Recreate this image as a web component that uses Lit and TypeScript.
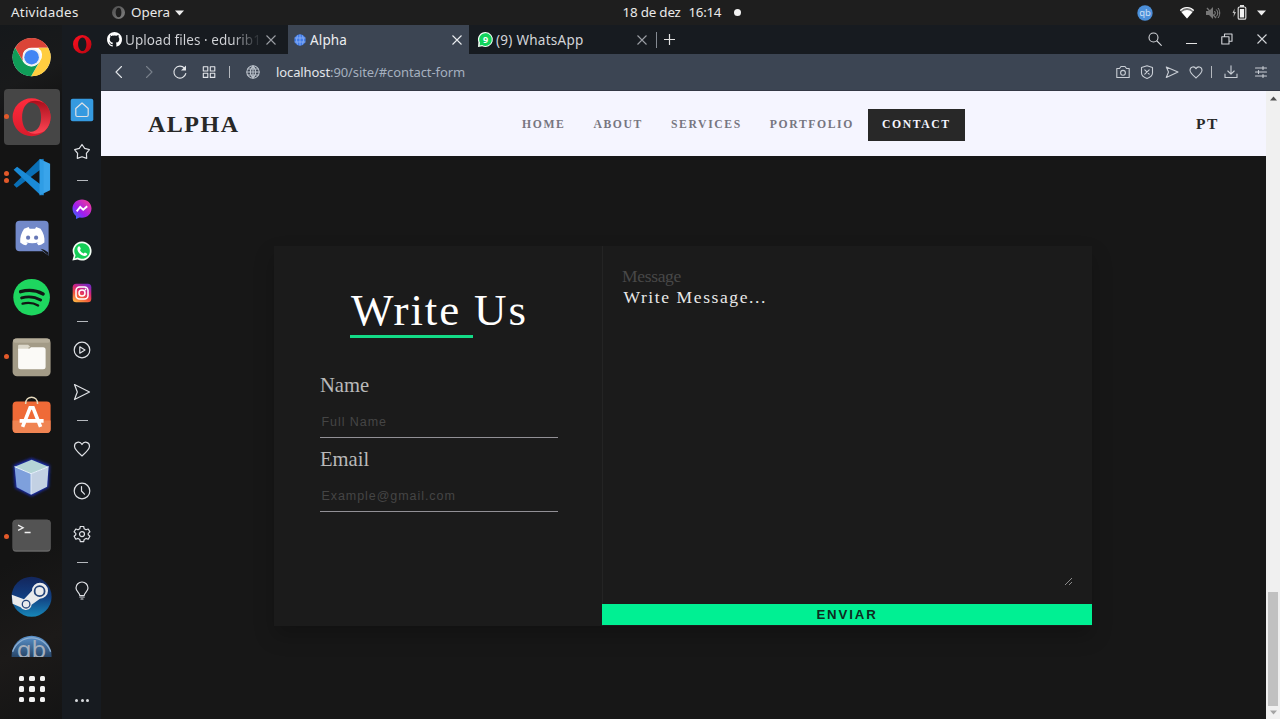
import { LitElement, html, svg, css } from "lit";
import { customElement } from "lit/decorators.js";

const shared = css`
  :host { box-sizing: border-box; }
  * { box-sizing: border-box; }
  svg { display: block; flex: none; overflow: visible; }
  .line { fill: none; stroke: currentColor; stroke-width: 1.2; stroke-linecap: round; stroke-linejoin: round; }
`;

const icon = (size: number, body: unknown, cls = "") =>
  html`<svg class=${cls} width=${size} height=${size} viewBox="0 0 ${size} ${size}">${body}</svg>`;

const operaRing = (id: string, a: string, b: string) => svg`
  <defs><linearGradient id=${id} x1="0" y1="0" x2="1" y2="1"><stop offset="0" stop-color=${a}/><stop offset="1" stop-color=${b}/></linearGradient></defs>
  <path fill="url(#${id})" fill-rule="evenodd" d="M19 0a19 19 0 1 0 0 38a19 19 0 1 0 0-38zM19.500 5c5 0 8 6 8 14s-3 14-8 14s-9-6-9-14s4-14 9-14z"/>`;

const whatsapp = svg`
  <path fill="#f4fff6" d="M10 .5a9.5 9.5 0 1 1-4.4 17.9L.4 19.6l1.4-5A9.5 9.5 0 0 1 10 .5z"/>
  <path fill="#14cf57" d="M10 2.2a7.8 7.8 0 1 1-4.1 14.4l-3.2.8.9-3.1A7.8 7.8 0 0 1 10 2.2z"/>
  <path fill="#fff" d="M6.5 5.6c.5-.5 1.1-.4 1.4.2l.8 1.8c.2.6-.9 1.3-.7 1.7.8 1.6 1.9 2.5 3.4 3.1.5.2 1.1-1.2 1.6-1l1.9 1c.6.4.4 1.300-.3 1.900-1.200 1.100-2.800.9-4.600 0-2.300-1.200-4-3.200-4.500-5.300-.300-1.400.200-2.800 1-3.400z"/>`;

@customElement("system-bar")
class SystemBar extends LitElement {
  static styles = [shared, css`
    :host { display: flex; height: 25px; align-items: center; background: #1e1e1e; color: #e9e9e9;
      font: 13.4px/25px "Noto Sans", sans-serif; white-space: nowrap; }
    .activities { width: 67px; margin-left: 11px; letter-spacing: .25px; }
    .app-icon { margin-left: 33.500px; }
    .app { width: 39px; margin-left: 6.500px; }
    .caret { margin-left: 5px; }
    .date { width: 59px; margin-left: 438.500px; letter-spacing: -.2px; }
    .time { width: 34px; margin-left: 7px; letter-spacing: -.3px; }
    .dot { width: 7px; height: 7px; border-radius: 50%; background: #f2f2f2; margin-left: 11px; }
    .tray { display: flex; align-items: center; margin-left: auto; padding-right: 14px; }
    .wifi { margin-left: 27px; }
    .mute { margin-left: 12px; }
    .battery { margin-left: 12px; }
    .tray-caret { margin-left: 10px; }
    .gb { font: 9.500px "Noto Sans", sans-serif; }
  `];
  render() {
    return html`
      <span class="activities">Atividades</span>
      <svg class="app-icon" width="13" height="13" viewBox="0 0 38 38">${operaRing("g", "#4b4b4b", "#838383")}</svg>
      <span class="app">Opera</span>
      <svg class="caret" width="9" height="6"><path fill="#eee" d="M0 .5h9L4.500 5.500z"/></svg>
      <span class="date">18 de dez</span><span class="time">16:14</span><span class="dot"></span>
      <div class="tray">
        <svg width="16" height="16"><circle cx="8" cy="8" r="7.700" fill="#4c8fd9"/><text class="gb" x="8" y="11" text-anchor="middle" fill="#c9def5">qb</text></svg>
        <svg class="wifi" width="14" height="13"><path d="M0 4.500C4 0 10 0 14 4.500L7 12.500z" fill="#777"/><path d="M1.600 6.300C5 3.300 9 3.300 12.400 6.300L7 12.500z" fill="#fff"/><path d="M.300 4.500C4 .500 10 .500 13.700 4.500" fill="none" stroke="#fff" stroke-width="1.200"/></svg>
        <svg class="mute" width="14" height="14"><path fill="#777" d="M0 5h3l4-4v12L3 9H0z"/><path d="M1 2l9 10" stroke="#777" stroke-width="1.300"/><path d="M8.500 5c1 1.300 1 2.700 0 4M10.300 3.500c2 2 2 5 0 7M12 2c2.300 3 2.300 7 0 10" fill="none" stroke="#888"/></svg>
        <svg class="battery" width="15" height="15"><path d="M2.600 3.500L.500 8h1.500l-.500 4L4 7H2.400z" fill="#bbb"/><rect x="6.200" y="2" width="7.600" height="12.200" rx="1.300" fill="none" stroke="#ddd" stroke-width="1.200"/><rect x="8" y="0" width="4" height="2" fill="#ddd"/><rect x="7.900" y="4" width="4.200" height="8.500" fill="#f2f2f2"/></svg>
        <svg class="tray-caret" width="9" height="6"><path fill="#eee" d="M0 .500h9L4.500 5.500z"/></svg>
      </div>`;
  }
}

const apps: { art: unknown; dots?: number; active?: boolean }[] = [
  { art: svg`<circle cx="20" cy="20" r="19" fill="#fff"/>
      <path fill="#db4437" d="M3.500 10.500A19 19 0 0 1 36.500 10.500H20a9.500 9.500 0 0 0-8.600 5.500L11 23.500z"/>
      <path fill="#ffcd40" d="M36.500 10.500A19 19 0 0 1 19.500 39l8.700-14.700a9.500 9.500 0 0 0-1.600-13.800z"/>
      <path fill="#0f9d58" d="M3.500 10.500A19 19 0 0 0 19.500 39l7.900-13.600a9.500 9.500 0 0 1-15.700-.700z"/>
      <circle cx="20" cy="20" r="9" fill="#f1f1f1"/><circle cx="20" cy="20" r="7.300" fill="#4285f4"/>` },
  { dots: 1, active: true, art: svg`<defs>
        <linearGradient id="o1" x1="0" y1="0" x2="0" y2="1"><stop offset="0" stop-color="#ff2b3c"/><stop offset="1" stop-color="#d91b2c"/></linearGradient>
        <linearGradient id="o2" x1="0" y1="0" x2="0" y2="1"><stop offset="0" stop-color="#a90f1c"/><stop offset="1" stop-color="#ff4554"/></linearGradient></defs>
      <path fill="url(#o1)" fill-rule="evenodd" d="M20 1a19 19 0 1 0 0 38a19 19 0 1 0 0-38zM20.500 4.500c6 0 9.500 7 9.500 15.500s-3.500 15.500-9.500 15.500s-10-7-10-15.500s4-15.500 10-15.500z"/>
      <path fill="url(#o2)" d="M15 7C19 2.500 26 2.500 32.700 5.900A19 19 0 0 1 32.700 34.100C26 37.500 19 37.500 15 33C21 37 29.500 33 29.500 20S21 3 15 7z"/>` },
  { dots: 2, art: svg`<path fill="#0a6fb5" d="M2 27.500L5 30.500 32 10V2L28 2z"/><path fill="#1a8ad6" d="M2 12.500L5.500 9.500 32 29.500V38L28 37z"/><path fill="#39a4ea" d="M28 1.800L38.500 6.500V33L28 38z"/><path fill="#2596e0" d="M28 2l4-.500V38l-4 .300z" opacity=".5"/>` },
  { art: svg`<path fill="#7289c9" d="M8 3.500h25a4 4 0 0 1 4 4V38.500l-6-4.500H8a4 4 0 0 1-4-4v-22.500a4 4 0 0 1 4-4z"/>
      <path fill="#17191d" d="M29 31.500l8 7-.500-3.500-4-2.500z"/>
      <path fill="#fff" d="M12.500 11.500l4.500-1.700 1 1.700h5.500l1-1.700 4.500 1.700c3 4.300 4.300 8.700 3.800 13.700-2 1.700-3.800 2.500-6 2.900l-1.600-2.200 2-1c-4.300 1.600-8.800 1.600-13 0l2 1-1.600 2.200c-2.200-.400-4-1.200-6-2.900-.300-5 1-9.400 3.900-13.700z"/>
      <circle cx="16.500" cy="20.500" r="2.100" fill="#6677b6"/><circle cx="24.500" cy="20.500" r="2.100" fill="#6677b6"/>` },
  { art: svg`<circle cx="20" cy="20" r="18.300" fill="#1ed65f"/><g fill="none" stroke="#121815" stroke-linecap="round"><path stroke-width="3.400" d="M9 14.500c7-2 16-1.300 22.500 2.200"/><path stroke-width="2.900" d="M10 20.700c6.500-1.700 13.500-1 19 2.200"/><path stroke-width="2.400" d="M11 26.400c5.500-1.300 11-.800 15.500 1.900"/></g>` },
  { dots: 1, art: svg`<rect x="1" y="1" width="38" height="38" rx="4.500" fill="#a39b87"/><rect x="1.500" y="1.500" width="37" height="4" rx="2" fill="#b6ae9b"/><path fill="#dcd8cb" d="M6.500 8.500a1 1 0 0 1 1-1H16.500l2.500 2.500h-2v3H6.500z"/><path fill="#fbfaf7" d="M6.500 11.500h11l2-1.500H31.500a2.500 2.500 0 0 1 2.500 2.500V29.500a2.500 2.500 0 0 1-2.500 2.500H9a2.500 2.500 0 0 1-2.500-2.500z"/>` },
  { art: svg`<g transform="translate(0 -1.800)"><rect x="1" y="6" width="38" height="31.500" rx="4" fill="#ef6a37"/><path fill="#f08452" d="M1 25h38v8.500a4 4 0 0 1-4 4H5a4 4 0 0 1-4-4z"/><path d="M14 8.500C14-.5 26-.5 26 8.500" fill="none" stroke="#e5d9bd" stroke-width="1.500"/><path d="M11 31.500L18.500 12.500h3L29 31.500M8 25.500h24" fill="none" stroke="#fff" stroke-width="3.600"/></g>` },
  { art: svg`<defs><filter id="gl" x="-30%" y="-30%" width="160%" height="160%"><feGaussianBlur stdDeviation="1.500"/></filter></defs>
      <g transform="translate(0 -1)"><path filter="url(#gl)" fill="#1a2eb8" d="M20 2L38 9 37 31 20 40 3.500 31.500 2 9z"/>
      <path fill="#b4d5d6" d="M20 3.500L37 10.500 19.500 17.500 3 10.500z"/><path fill="#7ea0dc" d="M3 10.500L19.500 17.500V38.500L5 31z"/><path fill="#c3d1e3" d="M37 10.500L19.500 17.500V38.500L35.500 30.500z"/><path d="M3 10.500l16.500 7L37 10.500M19.500 17.500V38" fill="none" stroke="#eaf4fb"/></g>` },
  { dots: 1, art: svg`<rect x="1" y="3.500" width="38" height="32" rx="3.500" fill="#666"/><rect x="1" y="3.500" width="38" height="30.500" rx="3.500" fill="#535353"/><path d="M6.500 9l5 2.500-5 2.700M13 16.300h6" fill="none" stroke="#f0f0f0" stroke-width="1.300"/>` },
  { art: svg`<defs><linearGradient id="st" x1="0" y1="0" x2="0" y2="1"><stop offset="0" stop-color="#13265c"/><stop offset=".5" stop-color="#123e80"/><stop offset="1" stop-color="#1787b9"/></linearGradient></defs>
      <g transform="translate(-.5 1.500)"><circle cx="20.500" cy="19" r="20" fill="url(#st)"/><path fill="#e9eaec" d="M.700 17l12.200 4.500 8-8.500a8 8 0 1 1 8 8L20.500 27a6 6 0 0 1-11 2.500L1.500 26z"/><circle cx="28.500" cy="13.500" r="5" fill="#e9eaec" stroke="#234379" stroke-width="1.800"/><circle cx="15" cy="26.500" r="3.800" fill="none" stroke="#234379" stroke-width="1.300"/></g>` },
  { art: svg`<defs><linearGradient id="gb" x1="0" y1="0" x2="0" y2="1"><stop offset="0" stop-color="#5b93cc"/><stop offset=".5" stop-color="#2a4a6e"/></linearGradient></defs>
      <circle cx="20" cy="19.500" r="20" fill="url(#gb)"/><path d="M1 15.500A20 20 0 0 1 39 15.500" fill="none" stroke="#8eb0d3" stroke-width="1.300"/><text x="20" y="22" text-anchor="middle" font-family="Noto Sans, sans-serif" font-size="24" fill="#a4afbd">gb</text>` },
];

@customElement("app-dock")
class AppDock extends LitElement {
  static styles = [shared, css`
    :host { display: flex; flex-direction: column; width: 62px; padding-top: 2px; background: linear-gradient(155deg, #15181b 0, #191a1b 9%, #141414 14%, #141414 75%, #1c1a19 88%, #141414 100%); }
    .apps { height: 629.500px; overflow: hidden; flex: none; }
    .app { height: 59.950px; display: flex; align-items: center; }
    .wrap { display: flex; align-items: center; width: 56px; height: 56px; margin-left: 4px; border-radius: 4px; }
    .active { background: #464646; }
    .dots { width: 11.500px; margin-left: -4px; padding-left: 3.500px; display: grid; gap: 2.500px; }
    .dot { width: 5px; height: 5px; border-radius: 50%; background: #e2592a; }
    .grid { display: grid; grid-template-columns: repeat(3, 5.500px); gap: 5px; margin: 19px 0 0 18.700px; }
    .cell { height: 5.500px; border-radius: 1.500px; background: #f2f2f2; }
  `];
  render() {
    return html`<div class="apps">${apps.map((a) => html`<div class="app"><div class="wrap ${a.active ? "active" : ""}">
        <div class="dots">${Array.from({ length: a.dots ?? 0 }, () => html`<span class="dot"></span>`)}</div>
        ${icon(40, svg`<g transform="translate(-.4 .2)">${a.art}</g>`)}</div></div>`)}</div>
      <div class="grid">${Array.from({ length: 9 }, () => html`<span class="cell"></span>`)}</div>`;
  }
}

const side: unknown[] = [
  svg`<rect x="-1.300" y="-1.300" width="22.600" height="22.600" rx="2" fill="#359ae0"/><path class="line" stroke-width="1.400" d="M3.800 8.500L10 3l6.200 5.500V15a1.500 1.500 0 0 1-1.500 1.500H5.300A1.500 1.500 0 0 1 3.800 15z"/>`,
  svg`<path class="line" d="M10 2.500l2.700 3.900 4.700 1.200-3 3.800.300 5-4.700-1.700-4.700 1.700.300-5-3-3.800 4.700-1.200z"/>`,
  null,
  svg`<defs><linearGradient id="m" x1="0" y1="1" x2="1" y2="0"><stop offset="0" stop-color="#1b80ff"/><stop offset=".4" stop-color="#9c1df0"/><stop offset="1" stop-color="#ff3f8d"/></linearGradient></defs><path fill="url(#m)" d="M10 .500c5.500 0 9.500 3.900 9.500 9s-4 9.200-9.500 9.200l-2.500-.300L4 20v-3C1.800 15.300.500 12.700.500 9.500c0-5.100 4-9 9.500-9z"/><path d="M4.700 12.300L8.200 8l3 2.800 4-3.500" fill="none" stroke="#fff" stroke-width="1.900"/>`,
  whatsapp,
  svg`<defs><linearGradient id="ig" x1=".2" y1="1" x2=".7" y2="0"><stop offset="0" stop-color="#fdb243"/><stop offset=".35" stop-color="#f3543b"/><stop offset=".65" stop-color="#d4257d"/><stop offset="1" stop-color="#7a2bc0"/></linearGradient></defs><rect x=".700" y=".700" width="18.600" height="18.600" rx="3.500" fill="url(#ig)"/><g fill="none" stroke="#fff" stroke-width="1.500"><rect x="4" y="4" width="12" height="12" rx="3.500"/><circle cx="10" cy="10" r="3"/></g><circle cx="13.500" cy="6.500" r=".9" fill="#fff"/>`,
  null,
  svg`<circle class="line" cx="10" cy="10" r="7.800"/><path class="line" d="M7.800 6.800l5.200 3.200-5.200 3.200z"/>`,
  svg`<path class="line" d="M2.500 2.500L17.500 10 2.500 17.500 5.300 10z"/>`,
  null,
  svg`<path class="line" d="M10 17C6 13.500 2.500 10.500 2.500 7.300c0-4.500 5.500-5.500 7.500-1.800 2-3.700 7.500-2.700 7.500 1.800C17.500 10.500 14 13.500 10 17z"/>`,
  svg`<circle class="line" cx="10" cy="10" r="7.800"/><path class="line" d="M9.500 5.500V10l3 3.200"/>`,
  svg`<path class="line" d="M8.300 2.500h3.400l.500 2.300 1.800 1 2.200-.800 1.700 2.900-1.700 1.500v1.400l1.700 1.500-1.700 2.900-2.200-.800-1.800 1-.500 2.300H8.300l-.5-2.300-1.800-1-2.200.8-1.700-2.900 1.700-1.500V9.400L2.100 7.900 3.800 5l2.200.8 1.800-1z"/><circle class="line" cx="10" cy="10.100" r="2.500"/>`,
  null,
  svg`<path class="line" d="M7.800 14.500c0-2.500-3.800-4-3.800-7.500a6 6 0 0 1 12 0c0 3.500-3.800 5-3.800 7.500zM7.800 16h4.400M9 18h2"/>`,
];

@customElement("browser-sidebar")
class BrowserSidebar extends LitElement {
  static styles = [shared, css`
    :host { display: flex; flex-direction: column; align-items: center; width: 39px; background: #171b20; color: #dfe1e5; padding: 0 0 11.500px 1px; }
    .logo { margin: 9.500px 0 35.500px; }
    .item { height: 42.250px; display: flex; align-items: center; flex: none; }
    .sep { height: 14.600px; display: flex; align-items: center; flex: none; }
    .sep::before { content: ""; width: 11px; height: 1px; background: #b5b8bd; }
    .more { margin-top: auto; display: flex; gap: 2.200px; padding-bottom: 6px; }
    .more span { width: 3px; height: 3px; border-radius: 50%; background: #d8dade; }
  `];
  render() {
    return html`<svg class="logo" width="18.500" height="18.500" viewBox="0 0 38 38">${operaRing("so", "#ff1020", "#b80510")}</svg>
      ${side.map((s) => s ? html`<div class="item">${icon(20, s)}</div>` : html`<div class="sep"></div>`)}
      <div class="more"><span></span><span></span><span></span></div>`;
  }
}

const close = (cls = "") => html`<svg class=${cls} width="10" height="10"><path d="M.500.500l9 9M9.500.500l-9 9" fill="none" stroke="currentColor" stroke-width="1.100"/></svg>`;

@customElement("browser-chrome")
class BrowserChrome extends LitElement {
  static styles = [shared, css`
    :host { display: block; font: 13.500px/20px "Noto Sans", sans-serif; color: #d3d5d9; white-space: nowrap; }
    .tabs { display: flex; height: 29px; align-items: center; background: #171b20; padding-right: 12px; }
    .tab { display: flex; align-items: center; height: 29px; }
    .first { width: 187px; padding: 0 12px 0 6px; }
    .current { width: 181px; background: #3c4553; color: #eceef1; padding: 0 7.500px 0 6px; }
    .third { width: 187px; padding: 0 9px 0 9px; }
    .title { margin-left: 3px; flex: 1; }
    .current .title { margin-left: 4px; letter-spacing: .15px; }
    .third .title { letter-spacing: .27px; }
    .fade { letter-spacing: .05px; background: linear-gradient(90deg, #d3d5d9 76%, #33373c 92%); -webkit-background-clip: text; background-clip: text; color: transparent; }
    .dim { color: #9b9ea4; }
    .bar { width: 1px; height: 16px; background: #858a92; }
    .plus { margin-left: 7px; }
    .tools { display: flex; align-items: center; margin-left: auto; padding-right: 1px; }
    .tools svg { margin-top: -2px; }
    .min { margin-left: 24px; width: 11px; height: 1px; background: #e4e4e4; margin-top: 7px; }
    .tools .restore { margin-left: 24px; }
    .tools .x { margin-left: 24px; }
    .address { display: flex; height: 37px; align-items: center; background: #3c4553; border-bottom: 1px solid #333845; padding: 0 13.500px 0 10px; color: #e3e6ea; }
    .forward { margin-left: 14px; color: #79808b; }
    .reload { margin-left: 14.500px; }
    .apps { margin-left: 13.500px; }
    .sep { width: 1px; height: 12px; background: #b4b8be; }
    .s1 { margin-left: 12px; }
    .globe { margin-left: 14.500px; color: #b9c0c9; }
    .url { margin-left: 15.500px; font-size: 13px; letter-spacing: -.1px; }
    .path { color: #a5b0bf; }
    .actions { display: flex; align-items: center; margin-left: auto; color: #c9ced5; }
    .a { margin-left: 8.500px; }
    .s2 { margin-left: 7px; }
    .down { margin-left: 10.500px; }
    .tune { margin-left: 16px; }
    .line { stroke-width: 1.100; }
    .nine { font: bold 12px "Noto Sans", sans-serif; }
  `];
  render() {
    return html`
      <div class="tabs">
        <div class="tab first">
          <svg width="15" height="15" viewBox="0 0 16 16"><path fill="#fff" d="M8 0a8 8 0 0 0-2.530 15.590c.4.070.550-.170.550-.380v-1.490c-2.230.480-2.700-.950-2.700-.950-.360-.920-.890-1.170-.890-1.170-.730-.500.050-.490.050-.490.800.060 1.230.830 1.230.830.720 1.220 1.870.870 2.330.660.070-.520.280-.870.510-1.070-1.780-.200-3.640-.890-3.640-3.950 0-.870.310-1.590.820-2.150-.080-.200-.360-1.020.080-2.120 0 0 .670-.210 2.200.820a7.600 7.600 0 0 1 4 0c1.530-1.040 2.200-.820 2.200-.820.440 1.100.160 1.920.080 2.120.510.560.820 1.270.820 2.150 0 3.070-1.870 3.750-3.650 3.950.290.250.540.730.540 1.480v2.200c0 .210.150.460.550.380A8 8 0 0 0 8 0z"/></svg>
          <span class="title fade">Upload files · edurib1</span>${close("dim")}
        </div>
        <div class="tab current">
          <svg width="12" height="12"><circle cx="6" cy="6" r="5.700" fill="#3f7bea"/><path d="M.500 4h11M.500 8h11M6 .500v11M3.500 1.500q-2 4.500 0 9M8.500 1.500q2 4.500 0 9" fill="none" stroke="#93b5f5" stroke-width=".8"/></svg>
          <span class="title">Alpha</span>${close()}
        </div>
        <div class="tab third">
          <svg width="15" height="15" viewBox="0 0 20 20"><path fill="#f4fff6" d="M10 0a10 10 0 1 1-4.500 19L0 20l.500-6.500A10 10 0 0 1 10 0z"/><path fill="#12d35c" d="M10 1.500a8.500 8.500 0 1 1-4.500 15.700L2.200 18l.500-3.800A8.500 8.500 0 0 1 10 1.500z"/><text class="nine" x="10" y="14.300" text-anchor="middle" fill="#fff">9</text></svg>
          <span class="title">(9) WhatsApp</span>${close("dim")}
        </div>
        <div class="bar"></div>
        <svg class="plus" width="11" height="11"><path d="M5.500 0v11M0 5.500h11" stroke="#e2e2e2" stroke-width="1.200"/></svg>
        <div class="tools">
          <svg width="14" height="14"><circle class="line" cx="5.500" cy="5.500" r="4.500"/><path class="line" d="M9 9l4.300 4.300"/></svg>
          <div class="min"></div>
          <svg class="restore" width="12" height="12"><path class="line" d="M.800 3.800h7.200v7.200H.800zM3.500 3.500V1h7.500v7.200H8.500"/></svg>
          ${close("x")}
        </div>
      </div>
      <div class="address">
        ${icon(16, svg`<path class="line" d="M10.500 2.500L5 8l5.500 5.500"/>`)}
        ${icon(16, svg`<path class="line" d="M5.500 2.500L11 8l-5.500 5.500"/>`, "forward")}
        ${icon(16, svg`<path class="line" stroke-width="1.500" d="M12.500 4.200A6 6 0 1 0 13.800 9.500"/><path fill="currentColor" d="M14 1.500v5H9z"/>`, "reload")}
        ${icon(16, svg`<path class="line" d="M2.300 2.800h4.500v4.200H2.300zM9.300 2.800h4.500v4.200H9.300zM2.300 9.200h4.500v4.200H2.300zM9.300 9.200h4.500v4.200H9.300z"/>`, "apps")}
        <span class="sep s1"></span>
        ${icon(16, svg`<circle class="line" cx="8" cy="8" r="6.200"/><path class="line" d="M1.800 8h12.400M8 1.800v12.400M2.800 5h10.400M2.800 11h10.400M8 1.800Q2.500 8 8 14.200M8 1.800Q13.500 8 8 14.200"/>`, "globe")}
        <span class="url">localhost<span class="path">:90/site/#contact-form</span></span>
        <div class="actions">
          ${icon(16, svg`<path class="line" d="M1.800 4.500h2.700L6 2.500h4l1.500 2h2.700v9H1.800z"/><circle class="line" cx="8" cy="8.800" r="2.400"/>`)}
          ${icon(16, svg`<path class="line" d="M8 1.800l5.500 1.700v5.500c0 2.500-2.800 4.500-5.500 5.500-2.700-1-5.500-3-5.500-5.500V3.500zM5.800 5.800l4.400 4.400M10.200 5.800l-4.400 4.400"/>`, "a")}
          ${icon(16, svg`<path class="line" d="M2.300 3l11.700 5-11.700 5.500L4.500 8z"/>`, "a")}
          ${icon(16, svg`<path class="line" d="M8 14C5 11.200 2 9 2 6.300c0-4 4.700-4.500 6-1.500 1.300-3 6-2.500 6 1.500C14 9 11 11.200 8 14z"/>`, "a")}
          <span class="sep s2"></span>
          ${icon(16, svg`<path class="line" d="M8 1.800V10M4.800 7L8 10.200 11.200 7M2 10v3.500h12V10"/>`, "down")}
          <svg class="tune" width="12" height="12"><path class="line" d="M.500 2h11M.500 6h11M.500 10h11M8 .500v3M3.500 4.500v3M8 8.500v3"/></svg>
        </div>
      </div>`;
  }
}

@customElement("contact-page")
class ContactPage extends LitElement {
  static styles = [shared, css`
    :host { display: flex; flex: 1; min-height: 0; font-family: "Liberation Serif", serif; }
    .page { flex: 1; background: #171717; display: flex; flex-direction: column; }
    .header { height: 65px; background: #f5f5ff; flex: none; display: flex; align-items: center; padding: 2px 47px 0 47px; color: #282828; font-weight: bold; }
    .brand { font-size: 24px; letter-spacing: 1.500px; width: 360px; line-height: 30px; margin-top: -2px; }
    .nav { display: flex; font-size: 11.700px; letter-spacing: 1.600px; }
    .link { padding: 0 14px; line-height: 32px; color: #777681; }
    .on { background: #282828; color: #f5f5ff; }
    .lang { margin-left: auto; font-size: 15.500px; letter-spacing: 1.550px; margin-top: -2px; }
    .card { display: grid; grid-template-columns: 328px 490px; width: 818px; height: 380px; margin: 90px 0 0 173px; background: #1b1b1b; box-shadow: 0 10px 19px rgba(0,0,0,.22); }
    .left { padding: 39px 45px 0; }
    .title { width: 177px; margin: 0 auto 0 32px; font-size: 45px; line-height: 51px; font-weight: 400; letter-spacing: 1.870px; color: #fff; white-space: nowrap; }
    .rule { width: 123px; height: 3px; margin-left: 31px; margin-top: -1px; background: #13db87; }
    .fields { padding-top: 34px; }
    .field { height: 74px; }
    .label { display: block; padding-left: 1px; font-size: 20.600px; line-height: 26px; color: #b9b9b9; }
    .input { display: block; width: 238px; height: 30px; margin-top: 9.500px; margin-left: .5px; padding: 0 2px 0; border: 0; border-bottom: 1px solid #929096; outline: 0; background: none; font: 12.500px "Liberation Sans", sans-serif; letter-spacing: .940px; }
    .input::placeholder { color: #454545; opacity: 1; }
    .right { border-left: 1px solid #242424; display: flex; flex-direction: column; padding-bottom: 1.400px; }
    .msg { padding: 18.500px 19px 0; flex: 1; display: flex; flex-direction: column; }
    .msg-label { font-size: 17.500px; letter-spacing: -.32px; line-height: 22px; color: #484848; }
    .area { display: block; flex: 1; padding: 0 1.500px; border: 0; outline: 0; resize: none; overflow: hidden; background: none; color: #e9e9e9; font: 17.500px/20px "Liberation Serif", serif; letter-spacing: 1.600px; }
    .grip { position: absolute; right: 1px; bottom: 19px; }
    .box { position: relative; flex: 1; display: flex; }
    .send { height: 21px; border: 0; padding: 0; margin-left: -1px; background: #00f093; color: #0f2b20; font: bold 13.200px/21px "Liberation Sans", sans-serif; letter-spacing: 1.900px; }
    .scroll { width: 14px; background: #f0f0f0; display: flex; flex-direction: column; align-items: center; padding: 5px 0 4px; }
    .thumb { width: 10px; height: 114px; background: #c1c1c1; margin-top: auto; margin-bottom: 4.500px; }
  `];
  render() {
    return html`
      <div class="page">
        <div class="header">
          <div class="brand">ALPHA</div>
          <div class="nav">${["HOME", "ABOUT", "SERVICES", "PORTFOLIO", "CONTACT"].map((n) => html`<span class="link ${n === "CONTACT" ? "on" : ""}">${n}</span>`)}</div>
          <div class="lang">PT</div>
        </div>
        <div class="card">
          <div class="left">
            <div class="title">Write Us</div><div class="rule"></div>
            <div class="fields">
              <div class="field"><label class="label">Name</label><input class="input" placeholder="Full Name"></div>
              <div class="field"><label class="label">Email</label><input class="input" placeholder="Example@gmail.com"></div>
            </div>
          </div>
          <div class="right">
            <div class="msg"><span class="msg-label">Message</span>
              <div class="box"><textarea class="area" .value=${"Write Message..."}></textarea>
                <svg class="grip" width="7" height="7"><path d="M0 7L7 0M4 7l3-3" stroke="#9a9a9a" stroke-width=".9"/></svg></div>
            </div>
            <button class="send">ENVIAR</button>
          </div>
        </div>
      </div>
      <div class="scroll">
        <svg width="7" height="5"><path d="M0 4.500L3.500.500 7 4.500z" fill="#505050"/></svg>
        <div class="thumb"></div>
        <svg width="7" height="5"><path d="M0 .500L3.500 4.500 7 .500z" fill="#a3a3a3"/></svg>
      </div>`;
  }
}

@customElement("app-root")
class AppRoot extends LitElement {
  static styles = css`
    :host { display: flex; flex-direction: column; width: 1280px; height: 719px; overflow: hidden; background: #141414; }
    .desk { display: flex; flex: 1; min-height: 0; }
    .window { display: flex; flex-direction: column; flex: 1; min-width: 0; }
  `;
  render() {
    return html`<system-bar></system-bar>
      <div class="desk"><app-dock></app-dock><browser-sidebar></browser-sidebar>
        <div class="window"><browser-chrome></browser-chrome><contact-page></contact-page></div></div>`;
  }
}
